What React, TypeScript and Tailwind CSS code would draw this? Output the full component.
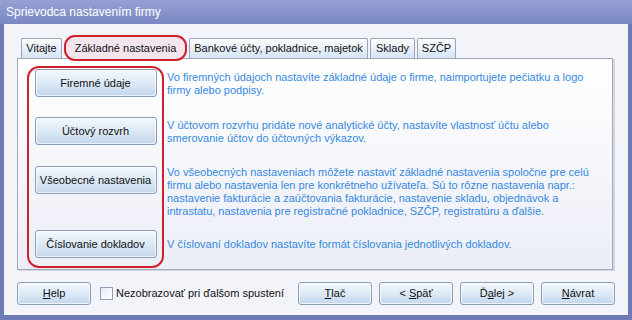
import React from 'react';

const font = { fontFamily: '"Liberation Sans", Arial, sans-serif' };

const tabs = [
  { label: 'Vitajte', w: 'w-[41px]' },
  { label: 'Základné nastavenia', w: 'w-[123px]', active: true },
  { label: 'Bankové účty, pokladnice, majetok', w: 'w-[179px]' },
  { label: 'Sklady', w: 'w-[45px]' },
  { label: 'SZČP', w: 'w-[39px]' },
];

const WinButton = ({ children, w = 'w-[122px]', h = 'h-[28px]' }: { children: React.ReactNode; w?: string; h?: string }) => (
  <button
    className={`${w} ${h} shrink-0 rounded-[3px] border border-[#8d9db7] bg-gradient-to-b from-[#f4f8fd] via-[#dde9f6] to-[#c3d7ee] text-[11px] text-[#111] shadow-[inset_0_0_0_1px_rgba(255,255,255,0.7)]`}
  >
    {children}
  </button>
);

const App = () => {
  return (
    <div className="w-[632px] h-[320px] flex flex-col bg-[#6d7ab6] overflow-hidden" style={font}>
      {/* title bar */}
      <div className="h-[24px] flex items-center px-[6px] bg-gradient-to-b from-[#96a1d4] to-[#7a87c2] text-white text-[12px]">
        Sprievodca nastavením firmy
      </div>

      {/* client area */}
      <div className="flex-1 flex flex-col ml-[4px] mr-[4px] mb-[5px] bg-[#f3f4fa]">
        {/* tabs */}
        <div className="flex items-end h-[34px] pl-[13px] pr-[13px]">
          <div className="flex items-end pl-[4px] gap-[2px]">
            {tabs.map((t) =>
              t.active ? (
                <div
                  key={t.label}
                  className={`${t.w} h-[26px] -mb-[3px] flex items-center justify-center rounded-[11px] border-2 border-[#d0202c] bg-[#f3e5ee] text-[11px] text-[#111] relative z-10`}
                >
                  {t.label}
                </div>
              ) : (
                <div
                  key={t.label}
                  className={`${t.w} h-[20px] flex items-center justify-center border border-b-0 border-[#9aa5bb] rounded-t-[2px] bg-gradient-to-b from-[#fbfdff] to-[#d5e4f4] text-[11px] text-[#111]`}
                >
                  {t.label}
                </div>
              )
            )}
          </div>
        </div>

        {/* panel */}
        <div className="ml-[13px] w-[596px] h-[212px] border border-[#a4a8bc] bg-gradient-to-b from-[#ffffff] to-[#eceef7] shadow-[2px_1px_0_#d4d6e2] flex pl-[9px] pt-[7px]">
          <div className="w-[137px] h-[202px] shrink-0 rounded-[12px] border-2 border-[#d0202c] flex flex-col items-center pt-[1px]">
            <WinButton>Firemné údaje</WinButton>
            <div className="mt-[20px]"><WinButton>Účtový rozvrh</WinButton></div>
            <div className="mt-[21px]"><WinButton>Všeobecné nastavenia</WinButton></div>
            <div className="mt-[36px]"><WinButton>Číslovanie dokladov</WinButton></div>
          </div>

          <div className="ml-[3px] flex flex-col text-[11px] leading-[13px] text-[#3589e0] pr-[6px]">
            <p className="mt-[5px]">
              Vo firemných údajoch nastavíte základné údaje o firme, naimportujete pečiatku a logo firmy alebo podpisy.
            </p>
            <p className="mt-[22px]">
              V účtovom rozvrhu pridáte nové analytické účty, nastavíte vlastnosť účtu alebo smerovanie účtov do účtovných výkazov.
            </p>
            <p className="mt-[21px]">
              Vo všeobecných nastaveniach môžete nastaviť základné nastavenia spoločne pre celú firmu alebo nastavenia len pre konkrétneho užívateľa. Sú to rôzne nastavenia napr.: nastavenie fakturácie a zaúčtovania fakturácie, nastavenie skladu, objednávok a intrastatu, nastavenia pre registračné pokladnice, SZČP, registratúru a ďalšie.
            </p>
            <p className="mt-[20px]">
              V číslovaní dokladov nastavíte formát číslovania jednotlivých dokladov.
            </p>
          </div>
        </div>

        {/* bottom buttons */}
        <div className="flex items-center mt-[12px] pl-[13px]">
          <WinButton w="w-[74px]" h="h-[23px]"><span className="underline">H</span>elp</WinButton>
          <div className="ml-[9px] w-[13px] h-[13px] border border-[#8ea0b8] bg-gradient-to-br from-[#e4ebf4] to-[#ffffff]" />
          <span className="ml-[3px] text-[11px] text-[#111]">Nezobrazovať pri ďalšom spustení</span>
          <div className="ml-auto mr-[13px] flex gap-[7px]">
            <WinButton w="w-[74px]" h="h-[23px]"><span className="underline">T</span>lač</WinButton>
            <WinButton w="w-[74px]" h="h-[23px]">&lt; <span className="underline">S</span>päť</WinButton>
            <WinButton w="w-[74px]" h="h-[23px]">Ď<span className="underline">a</span>lej &gt;</WinButton>
            <WinButton w="w-[74px]" h="h-[23px]"><span className="underline">N</span>ávrat</WinButton>
          </div>
        </div>
      </div>
    </div>
  );
};

export default App;
